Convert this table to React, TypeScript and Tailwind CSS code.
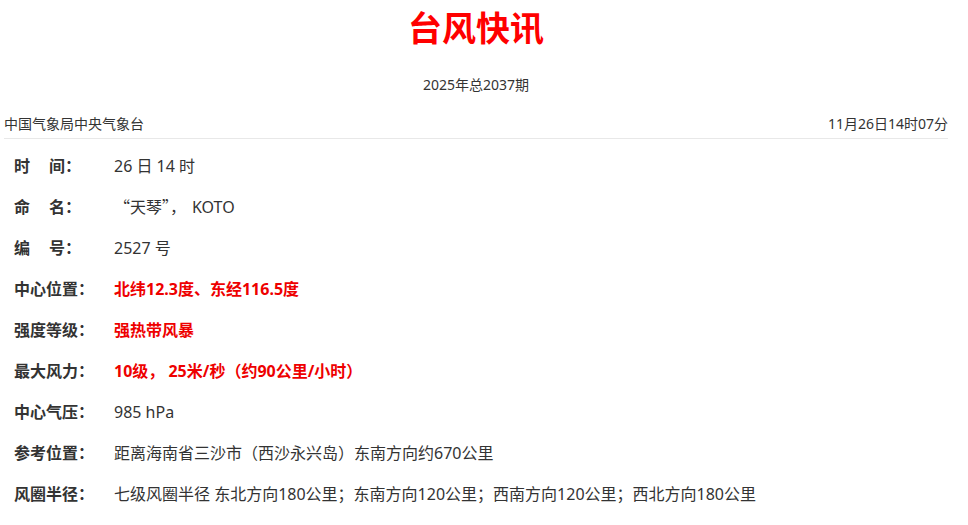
import React from 'react';

type Row = {
  label: React.ReactNode;
  value: React.ReactNode;
  red?: boolean;
};

const Gap = () => <span className="inline-block w-[19px]" />;

const rows: Row[] = [
  { label: <>时<Gap />间：</>, value: '26 日 14 时' },
  {
    label: <>命<Gap />名：</>,
    value: (
      <>
        <span style={{ fontFamily: '"Noto Sans CJK SC", sans-serif' }}>“天琴”，</span>
        <span className="ml-[6px]">KOTO</span>
      </>
    ),
  },
  { label: <>编<Gap />号：</>, value: '2527 号' },
  { label: '中心位置：', value: '北纬12.3度、东经116.5度', red: true },
  { label: '强度等级：', value: '强热带风暴', red: true },
  { label: '最大风力：', value: '10级， 25米/秒（约90公里/小时）', red: true },
  { label: '中心气压：', value: '985 hPa' },
  { label: '参考位置：', value: '距离海南省三沙市（西沙永兴岛）东南方向约670公里' },
  {
    label: '风圈半径：',
    value: '七级风圈半径 东北方向180公里；东南方向120公里；西南方向120公里；西北方向180公里',
  },
];

export default function App() {
  return (
    <div
      className="min-h-screen bg-white text-[#333]"
      style={{ fontFamily: '"Noto Sans", "Noto Sans CJK SC", sans-serif' }}
    >
      <div className="ml-[4px] w-[944px]">
        <h1 className="h-[56px] text-center text-[34px] font-bold leading-[56px] text-[#f00]">
          台风快讯
        </h1>
        <div className="mt-[19px] text-center text-[14px] leading-[20px]">2025年总2037期</div>
        <div className="mt-[19px] flex justify-between border-b border-[#e8e8e8] pb-[4px] text-[14px] leading-[20px]">
          <span>中国气象局中央气象台</span>
          <span>11月26日14时07分</span>
        </div>

        <div className="mt-[6px] pl-[10px]">
          {rows.map((r, i) => (
            <div key={i} className="flex h-[41px] items-center text-[16px]">
              <div className="w-[100px] shrink-0 font-bold">{r.label}</div>
              <div className={r.red ? 'font-bold text-[#ee0000]' : ''}>{r.value}</div>
            </div>
          ))}
        </div>
      </div>
    </div>
  );
}
